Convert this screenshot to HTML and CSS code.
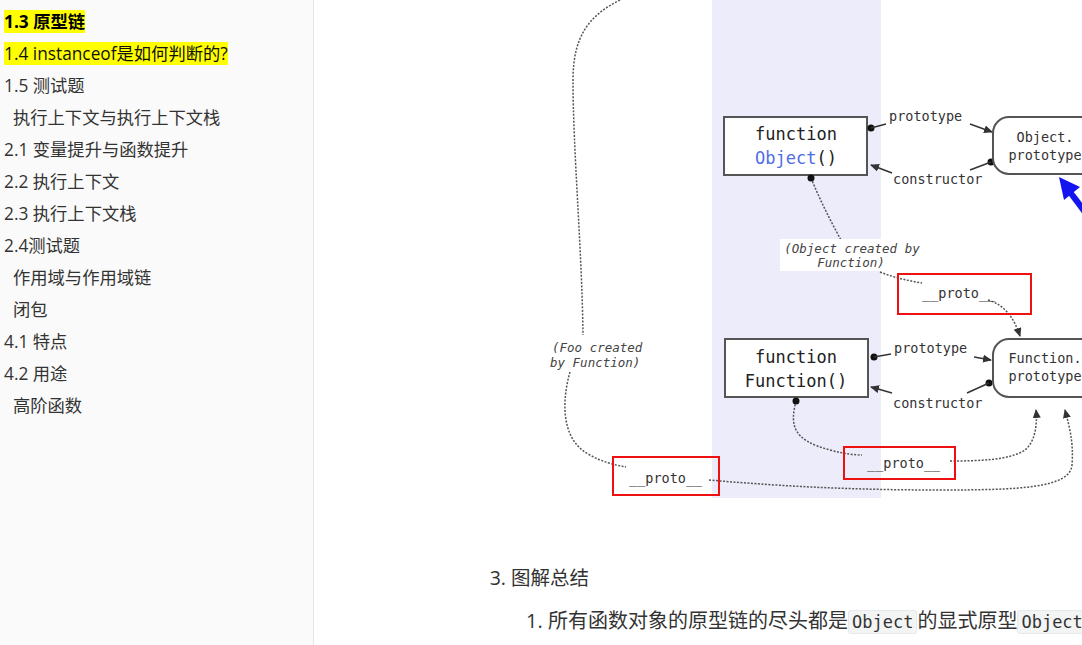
FILE: index.html
```html
<!DOCTYPE html>
<html lang="zh">
<head>
  <meta charset="UTF-8">
  <title>原型链</title>
  <link rel="stylesheet" href="styles.css">
</head>
<body>
  <aside class="sidebar">
    <ul class="toc">
      <li><span class="mark strong">1.3 原型链</span></li>
      <li><span class="mark">1.4 instanceof是如何判断的?</span></li>
      <li>1.5 测试题</li>
      <li class="chapter">执行上下文与执行上下文栈</li>
      <li>2.1 变量提升与函数提升</li>
      <li>2.2 执行上下文</li>
      <li>2.3 执行上下文栈</li>
      <li>2.4测试题</li>
      <li class="chapter">作用域与作用域链</li>
      <li class="chapter">闭包</li>
      <li>4.1 特点</li>
      <li>4.2 用途</li>
      <li class="chapter">高阶函数</li>
    </ul>
  </aside>

  <main class="content">
    <figure class="diagram">
      <svg width="560" height="498" viewBox="0 0 560 498">
        <defs>
          <marker id="ah" markerUnits="userSpaceOnUse" markerWidth="9" markerHeight="8" refX="8" refY="4" orient="auto">
            <path d="M0,0 L9,4 L0,8 z" fill="#333"/>
          </marker>
        </defs>

        <rect class="band" x="172" y="0" width="169" height="498"/>

        <!-- dashed links -->
        <path class="dash" d="M80 0 C50 15, 33 35, 33 80 C33 150, 42 250, 43 335"/>
        <path class="dash" d="M30 372 C22 400, 20 440, 50 455 C62 462, 75 465, 86 467"/>
        <path class="dash" d="M169 480 C250 487, 320 490, 400 490 C480 490, 530 488, 532 465 C534 440, 528 422, 525 410" marker-end="url(#ah)"/>
        <path class="dash" d="M256 401 C250 425, 252 440, 290 450 C305 454, 315 455, 322 455"/>
        <path class="dash" d="M410 461 C440 461, 470 460, 485 450 C497 440, 497 420, 496 410" marker-end="url(#ah)"/>
        <path class="dash" d="M271 178 C280 200, 290 220, 301 240"/>
        <path class="dash" d="M340 272 C355 278, 370 281, 382 283"/>
        <path class="dash" d="M448 300 C465 305, 474 318, 480 336" marker-end="url(#ah)"/>

        <!-- Object row -->
        <rect class="box" x="184" y="117" width="143" height="58"/>
        <text class="mono" x="256" y="140" text-anchor="middle">function</text>
        <text class="mono" x="256" y="164" text-anchor="middle"><tspan class="blue">Object</tspan>()</text>
        <circle class="dot" cx="331" cy="128" r="3.5"/>
        <line class="solid" x1="331" y1="128" x2="346" y2="124"/>
        <text class="small" x="349" y="121">prototype</text>
        <line class="solid" x1="430" y1="124" x2="452" y2="132" marker-end="url(#ah)"/>
        <text class="small" x="353" y="184">constructor</text>
        <circle class="dot" cx="451" cy="162" r="3.5"/>
        <line class="solid" x1="451" y1="162" x2="430" y2="170"/>
        <line class="solid" x1="352" y1="173" x2="331" y2="165" marker-end="url(#ah)"/>
        <rect class="box" x="453" y="117" width="200" height="57" rx="16"/>
        <text class="small" x="505" y="142" text-anchor="middle">Object.</text>
        <text class="small" x="505" y="160" text-anchor="middle">prototype</text>
        <circle class="dot" cx="271" cy="178" r="3.5"/>

        <!-- note -->
        <rect class="note-bg" x="240" y="239" width="101" height="32"/>
        <text class="note" x="312" y="253" text-anchor="middle">(Object created by</text>
        <text class="note" x="311" y="267" text-anchor="middle">Function)</text>

        <rect class="hl" x="358" y="274" width="133" height="40"/>
        <text class="small" x="382" y="298">__proto__</text>

        <!-- Function row -->
        <rect class="box" x="185" y="339" width="143" height="58"/>
        <text class="mono" x="256" y="363" text-anchor="middle">function</text>
        <text class="mono" x="256" y="387" text-anchor="middle">Function()</text>
        <circle class="dot" cx="334" cy="357" r="3.5"/>
        <line class="solid" x1="334" y1="357" x2="351" y2="354"/>
        <text class="small" x="354" y="353">prototype</text>
        <line class="solid" x1="434" y1="357" x2="451" y2="360" marker-end="url(#ah)"/>
        <text class="small" x="353" y="408">constructor</text>
        <circle class="dot" cx="449" cy="383" r="3.5"/>
        <line class="solid" x1="449" y1="383" x2="427" y2="393"/>
        <line class="solid" x1="352" y1="393" x2="331" y2="387" marker-end="url(#ah)"/>
        <rect class="box" x="453" y="339" width="200" height="58" rx="16"/>
        <text class="small" x="505" y="363" text-anchor="middle">Function.</text>
        <text class="small" x="505" y="381" text-anchor="middle">prototype</text>
        <circle class="dot" cx="256" cy="401" r="3.5"/>

        <text class="note" x="12" y="352">(Foo created</text>
        <text class="note" x="10" y="367">by Function)</text>

        <rect class="hl" x="304" y="447" width="111" height="32"/>
        <text class="small" x="327" y="468">__proto__</text>
        <rect class="hl" x="73" y="457" width="106" height="38"/>
        <text class="small" x="89" y="483">__proto__</text>

        <!-- blue pointer -->
        <line class="pointer-shadow" x1="533" y1="196" x2="575" y2="252"/>
        <line class="pointer" x1="530" y1="192" x2="572" y2="248"/>
        <polygon class="pointer-head" points="519,177 540,187 524,200"/>
      </svg>
    </figure>

    <ol class="steps" start="3">
      <li>图解总结
        <ol class="sub">
          <li>所有函数对象的原型链的尽头都是<code>Object</code>的显式原型<code>Object.prototype</code></li>
        </ol>
      </li>
    </ol>
  </main>
</body>
</html>
```

FILE: styles.css
```css
body {
  margin: 0;
  display: flex;
  height: 100vh;
  overflow: hidden;
  background: #fff;
  color: #333;
  font-family: "Open Sans", "Noto Sans CJK SC", sans-serif;
}

.sidebar {
  flex: 0 0 313px;
  background: #fafafa;
  border-right: 1px solid #e6e6e6;
}

.toc {
  list-style: none;
  margin: 0;
  padding: 6px 0 0 4px;
  font-size: 17.3px;
  line-height: 32px;
  white-space: nowrap;
}

.toc .chapter {
  padding-left: 9px;
}

.mark {
  background: #ffff00;
  color: #111;
}

.strong {
  font-weight: bold;
  color: #000;
}

.content {
  flex: 1;
  min-width: 0;
  overflow: hidden;
  padding-left: 170px;
}

.diagram {
  margin: 0 0 0 56px;
}

.diagram svg {
  display: block;
}

.band { fill: #ececfa; }
.box { fill: #fff; stroke: #555; stroke-width: 2; }
.hl { fill: none; stroke: #ee1111; stroke-width: 2; }
.note-bg { fill: #fff; }
.dot { fill: #111; }
.solid { stroke: #333; stroke-width: 1.5; }
.dash { fill: none; stroke: #555; stroke-width: 1.5; stroke-dasharray: 2 1.5; }

.mono { font: 17px "DejaVu Sans Mono", monospace; fill: #222; }
.blue { fill: #4f6de6; }
.small { font: 13.5px "DejaVu Sans Mono", monospace; fill: #333; }
.note { font: italic 12.5px "DejaVu Sans Mono", monospace; fill: #444; }

.pointer { stroke: #1414f0; stroke-width: 6; }
.pointer-shadow { stroke: #9a9ad0; stroke-width: 7; opacity: 0.5; }
.pointer-head { fill: #1414f0; }

.steps {
  margin: 65px 0 0;
  padding-left: 27px;
  font-size: 19.5px;
  line-height: 30px;
  white-space: nowrap;
}

.steps .sub {
  margin: 13px 0 0;
  padding-left: 37px;
  font-size: 20px;
}

code {
  font-family: "DejaVu Sans Mono", monospace;
  font-size: 17px;
  background: #f3f4f4;
  border: 1px solid #e7eaed;
  border-radius: 3px;
  padding: 1px 3px;
}
```
